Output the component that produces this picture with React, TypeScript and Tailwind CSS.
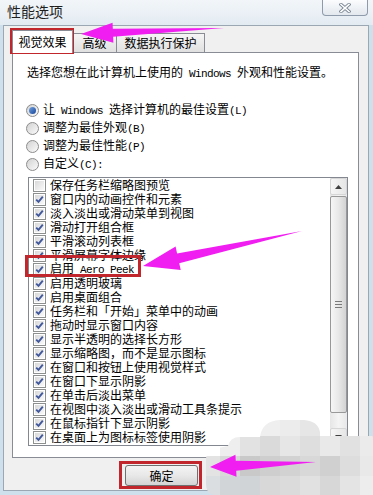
import type { ReactNode } from "react"

const options: [string, boolean][] = [
  ["让 Windows 选择计算机的最佳设置(L)", true],
  ["调整为最佳外观(B)", false],
  ["调整为最佳性能(P)", false],
  ["自定义(C):", false],
]

const effects: [string, boolean][] = [
  ["保存任务栏缩略图预览", false],
  ["窗口内的动画控件和元素", true],
  ["淡入淡出或滑动菜单到视图", true],
  ["滑动打开组合框", true],
  ["平滑滚动列表框", true],
  ["平滑屏幕字体边缘", true],
  ["启用 Aero Peek", true],
  ["启用透明玻璃", true],
  ["启用桌面组合", true],
  ["任务栏和「开始」菜单中的动画", true],
  ["拖动时显示窗口内容", true],
  ["显示半透明的选择长方形", true],
  ["显示缩略图，而不是显示图标", true],
  ["在窗口和按钮上使用视觉样式", true],
  ["在窗口下显示阴影", true],
  ["在单击后淡出菜单", true],
  ["在视图中淡入淡出或滑动工具条提示", true],
  ["在鼠标指针下显示阴影", true],
  ["在桌面上为图标标签使用阴影", true],
]

// mosaic cells of the blurred patch, bottom right
const mosaic: [number, number, string][] = [
  [260, 416, "#efefef"], [280, 416, "#ececec"], [300, 416, "#e6e6e6"],
  [220, 436, "#eeeeee"], [240, 436, "#e2e2e2"], [260, 436, "#dadada"], [280, 436, "#e6e6e6"],
  [300, 436, "#dedede"], [320, 436, "#e9e9e9"], [340, 436, "#e1e1e1"], [360, 436, "#ebebeb"],
  [200, 456, "#e3e3e3"], [220, 456, "#d8d8d8"], [240, 456, "#c9c9c9"], [260, 456, "#cecece"],
  [280, 456, "#d2d2d2"], [300, 456, "#d8d8d8"], [320, 456, "#d0d0d0"], [340, 456, "#dddddd"], [360, 456, "#e9e9e9"],
  [200, 476, "#dadee1"], [220, 476, "#d1d5d8"], [240, 476, "#d0d4d7"], [260, 476, "#d8d8d8"],
  [280, 476, "#dbdbdb"], [300, 476, "#e1e1e1"], [320, 476, "#d7d7d7"], [340, 476, "#e4e4e4"], [360, 476, "#ededed"],
]

// mixed text: latin runs use a fixed half-width face like the dialog font
function Txt({ s }: { s: string }) {
  const parts = s.split(/([\x20-\x7e]+)/)
  return (
    <>
      {parts.map((p, i) =>
        i % 2 ? (
          <span key={i} className="whitespace-pre font-['Liberation_Mono',monospace] text-[11px] tracking-[-0.6px]">
            {p}
          </span>
        ) : (
          p
        )
      )}
    </>
  )
}

function arrow(tip: [number, number], tail: [number, number], headLen: number, headW: number, shaftW: number) {
  const dx = tail[0] - tip[0]
  const dy = tail[1] - tip[1]
  const len = Math.hypot(dx, dy)
  const ux = dx / len
  const uy = dy / len
  const nx = -uy
  const ny = ux
  const bx = tip[0] + ux * headLen
  const by = tip[1] + uy * headLen
  const pts = [
    tip,
    [bx + nx * headW, by + ny * headW],
    [bx + nx * shaftW, by + ny * shaftW],
    tail,
    [bx - nx * shaftW, by - ny * shaftW],
    [bx - nx * headW, by - ny * headW],
  ]
  return pts.map((p) => p.join(",")).join(" ")
}

function Check({ on }: { on: boolean }) {
  return (
    <span className="flex h-[13px] w-[13px] shrink-0 items-center justify-center border border-[#8e8f8f] bg-white p-px">
      <span className="flex h-full w-full items-center justify-center bg-gradient-to-br from-[#d9d9d9] to-[#f9f9f9]">
        {on && (
          <svg width="9" height="9" viewBox="0 0 9 9">
            <path d="M1.2 4.6 L3.5 6.9 L7.8 1.6" fill="none" stroke="#41599c" strokeWidth="1.9" />
          </svg>
        )}
      </span>
    </span>
  )
}

function Radio({ on }: { on: boolean }) {
  return (
    <span className="flex h-[13px] w-[13px] shrink-0 items-center justify-center rounded-full border border-[#8c8c8c] bg-gradient-to-br from-[#d2d2d2] to-[#fbfbfb]">
      {on && <span className="h-[7px] w-[7px] rounded-full bg-gradient-to-br from-[#76a4e0] to-[#16449a]" />}
    </span>
  )
}

function Tab({ children, active, w }: { children: ReactNode; active?: boolean; w: string }) {
  if (active)
    return (
      <div className={`relative z-10 -mb-px flex h-[23px] items-center justify-center border border-b-0 border-[#898c95] bg-white ${w}`}>
        {children}
      </div>
    )
  return (
    <div className={`-ml-px flex h-[19px] items-center justify-center border border-b-0 border-[#898c95] bg-gradient-to-b from-[#f5f5f5] to-[#e0e0e0] ${w}`}>
      {children}
    </div>
  )
}

export default function App() {
  return (
    <div className="relative flex h-[495px] w-[373px] flex-col overflow-hidden bg-[#cfe0ed] font-['Noto_Sans_CJK_SC','Noto_Sans',sans-serif] text-[12px] leading-[14px] text-black">
      {/* title bar */}
      <div className="flex h-[25px] shrink-0 items-start bg-gradient-to-b from-[#f2f6f9] to-[#e3ebf2]">
        <span className="ml-[7px] mt-[3px] text-[14px] leading-[17px] text-[#1e1e1e]">性能选项</span>
        <div className="ml-auto mr-[5px] flex h-[16px] w-[46px] items-center justify-center rounded-b-[4px] border border-t-0 border-[#8e9bab] bg-gradient-to-b from-[#fbfcfd] to-[#e2e8ee]">
          <svg width="12" height="10" viewBox="0 0 12 10">
            <path d="M2 1.5 L10 8.5 M10 1.5 L2 8.5" stroke="#7b8795" strokeWidth="3.4" strokeLinecap="square" />
            <path d="M2 1.5 L10 8.5 M10 1.5 L2 8.5" stroke="#ffffff" strokeWidth="1.6" strokeLinecap="square" />
          </svg>
        </div>
      </div>

      {/* client area */}
      <div className="ml-[3px] flex h-[466px] w-[366px] shrink-0 flex-col border border-[#9ba7b2] bg-[#f0f0f0]">
        <div className="flex h-[26px] shrink-0 items-end pl-[8px]">
          <Tab active w="w-[61px]">视觉效果</Tab>
          <Tab w="w-[45px]">高级</Tab>
          <Tab w="w-[89px]">数据执行保护</Tab>
        </div>

        <div className="ml-[8px] flex h-[406px] w-[347px] shrink-0 flex-col border border-[#898c95] bg-white">
          <p className="ml-[14px] mt-[12px] whitespace-nowrap">
            <Txt s="选择您想在此计算机上使用的 Windows 外观和性能设置。" />
          </p>

          <div className="mt-[20px] flex flex-col">
            {options.map(([label, on]) => (
              <div key={label} className="flex h-[18px] items-center gap-[4px] pl-[13px]">
                <Radio on={on} />
                <span className="whitespace-nowrap">
                  <Txt s={label} />
                </span>
              </div>
            ))}
          </div>

          <div className="ml-[15px] mt-[4px] flex h-[269px] w-[320px] border border-[#828790]">
            <div className="flex flex-1 flex-col">
              {effects.map(([label, on]) => (
                <div key={label} className="flex h-[14px] shrink-0 items-center pl-[4px]">
                  <Check on={on} />
                  <span className="ml-[4px] whitespace-nowrap">
                    <Txt s={label} />
                  </span>
                </div>
              ))}
            </div>

            {/* scrollbar */}
            <div className="flex w-[17px] flex-col bg-gradient-to-r from-[#e6e6e6] via-[#f4f4f4] to-[#e8e8e8]">
              <div className="flex h-[17px] items-center justify-center rounded-[2px] border border-[#d6d6d6] bg-gradient-to-r from-[#f6f6f6] to-[#e6e6e6]">
                <svg width="7" height="4" viewBox="0 0 7 4">
                  <path d="M0 4 L3.5 0 L7 4 Z" fill="#404040" />
                </svg>
              </div>
              <div className="mt-px flex h-[217px] items-center justify-center rounded-[2px] border border-[#989898] bg-gradient-to-r from-[#f6f6f6] via-[#e8e8e8] to-[#d3d3d3]">
                <div className="flex flex-col gap-[2px]">
                  <span className="h-px w-[7px] bg-[#7a7a7a]" />
                  <span className="h-px w-[7px] bg-[#7a7a7a]" />
                  <span className="h-px w-[7px] bg-[#7a7a7a]" />
                </div>
              </div>
              <div className="flex-1" />
              <div className="flex h-[17px] items-center justify-center rounded-[2px] border border-[#d6d6d6] bg-gradient-to-r from-[#f6f6f6] to-[#e6e6e6]">
                <svg width="7" height="4" viewBox="0 0 7 4">
                  <path d="M0 0 L3.5 4 L7 0 Z" fill="#404040" />
                </svg>
              </div>
            </div>
          </div>
        </div>

        <div className="flex flex-1">
          <button className="ml-[121px] mt-[7px] flex h-[21px] w-[73px] items-center justify-center rounded-[3px] border border-[#707070] bg-gradient-to-b from-[#f4f4f4] via-[#e8e8e8] to-[#d4d4d4] leading-none">
            确定
          </button>
        </div>
      </div>

      {/* annotation overlays */}
      <div className="absolute left-[10px] top-[28px] h-[26px] w-[64px] border-[3px] border-[#c0262c]" />
      <div className="absolute left-[25px] top-[255px] h-[22px] w-[116px] border-[3px] border-[#c0262c]" />
      <div className="absolute left-[119px] top-[461px] h-[28px] w-[83px] border-[3px] border-[#c0262c]" />

      <svg className="pointer-events-none absolute left-0 top-0" width="373" height="495" viewBox="0 0 373 495">
        <defs>
          <clipPath id="blob">
            <path d="M228 446 Q230 437 240 437 L260 437 Q262 421 280 420 L304 420 Q318 421 320 432 L366 432 Q373 432 373 440 L373 495 L214 495 Q206 494 206 484 L206 458 Q207 449 218 448 Z" />
          </clipPath>
        </defs>
        <g clipPath="url(#blob)">
          {mosaic.map(([x, y, c]) => (
            <rect key={`${x}-${y}`} x={x} y={y} width="20" height="20" fill={c} />
          ))}
        </g>
        <polygon points={arrow([81, 34], [224, 28], 32, 10, 4)} fill="#f01ef0" />
        <polygon points={arrow([143, 266], [302, 231], 36, 12, 5)} fill="#f01ef0" />
        <polygon points={arrow([210, 467], [316, 462], 26, 11, 5)} fill="#f01ef0" />
      </svg>
    </div>
  )
}
